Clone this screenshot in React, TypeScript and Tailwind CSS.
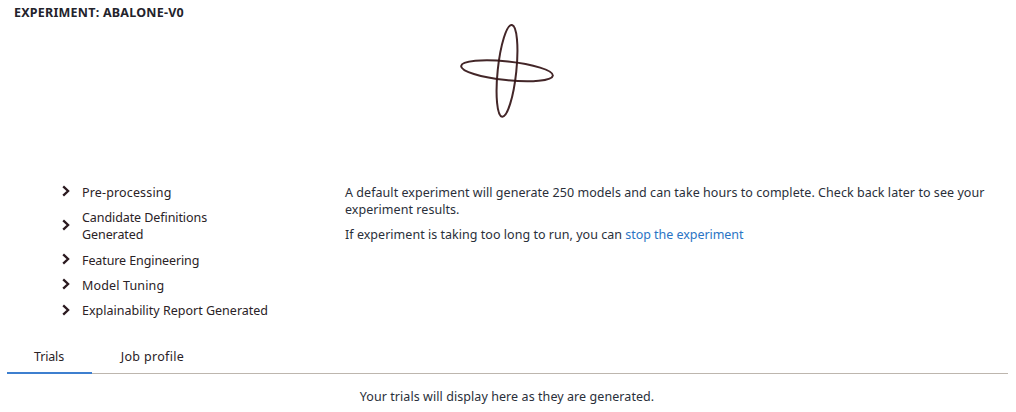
import React from "react";

const steps = [
  { label: "Pre-processing", row: "h-[25px]", text: "tracking-[0.15px]", icon: "mb-1" },
  { label: "Candidate Definitions Generated", row: "h-[43px]", text: "tracking-[-0.08px] pb-[2px]", icon: "mb-1" },
  { label: "Feature Engineering", row: "h-[25px]", text: "tracking-[-0.1px]", icon: "mb-1" },
  { label: "Model Tuning", row: "h-[25px]", text: "tracking-[0.15px]", icon: "mb-1" },
  { label: "Explainability Report Generated", row: "h-[25px]", text: "", icon: "mb-[2px]" },
];

function Chevron({ className }: { className: string }) {
  return (
    <svg width="8" height="12" viewBox="0 0 8 12" className={`shrink-0 ${className}`} fill="none" stroke="#2b1a20" strokeWidth="2.3">
      <path d="M1.2 1.3 6.1 6 1.2 10.7" />
    </svg>
  );
}

export default function App() {
  return (
    <main className="flex h-[412px] w-[1016px] flex-col overflow-hidden bg-white font-['Noto_Sans',sans-serif] text-[12.5px] leading-[17px] text-[#2a2226]">
      <h1 className="h-6 pt-1 pl-[14px] text-[12.5px] font-bold tracking-[0.23px] text-[#23232b]">EXPERIMENT: ABALONE-V0</h1>
      <div className="flex h-[156px] justify-center pr-[2px]">
        <svg width="96" height="96" viewBox="0 0 96 96" fill="none" stroke="#331416" strokeOpacity="0.92" strokeWidth="2">
          <ellipse cx="48" cy="46.8" rx="46.1" ry="9.3" transform="rotate(6 48 46.8)" />
          <ellipse cx="48" cy="46.8" rx="9.3" ry="46.1" transform="rotate(6 48 46.8)" />
        </svg>
      </div>
      <section className="flex h-[163px]">
        <ul className="w-[345px] pl-[62px]">
          {steps.map((s) => (
            <li key={s.label} className={`flex items-center gap-3 ${s.row}`}>
              <Chevron className={s.icon} />
              <span className={`w-[187px] ${s.text}`}>{s.label}</span>
            </li>
          ))}
        </ul>
        <div className="flex w-[650px] flex-col gap-2 pt-1 text-[#2a2f3a]">
          <p className="tracking-[0.05px]">A default experiment will generate 250 models and can take hours to complete. Check back later to see your experiment results.</p>
          <p className="tracking-[0.03px]">If experiment is taking too long to run, you can <a className="tracking-[-0.05px] text-[#2a74c4]">stop the experiment</a></p>
        </div>
      </section>
      <nav className="mr-2 ml-[7px] flex h-[31px] border-b border-[#bdb6ae]">
        <span className="-mb-px w-[85px] border-b-2 border-[#3e7fcf] pt-[5px] pr-px text-center tracking-[-0.15px]">Trials</span>
        <span className="w-[121px] pt-[5px] text-center tracking-[0.33px]">Job profile</span>
      </nav>
      <p className="pt-[14px] pr-[2px] text-center tracking-[0.07px] text-[#2a2f3a]">Your trials will display here as they are generated.</p>
    </main>
  );
}
